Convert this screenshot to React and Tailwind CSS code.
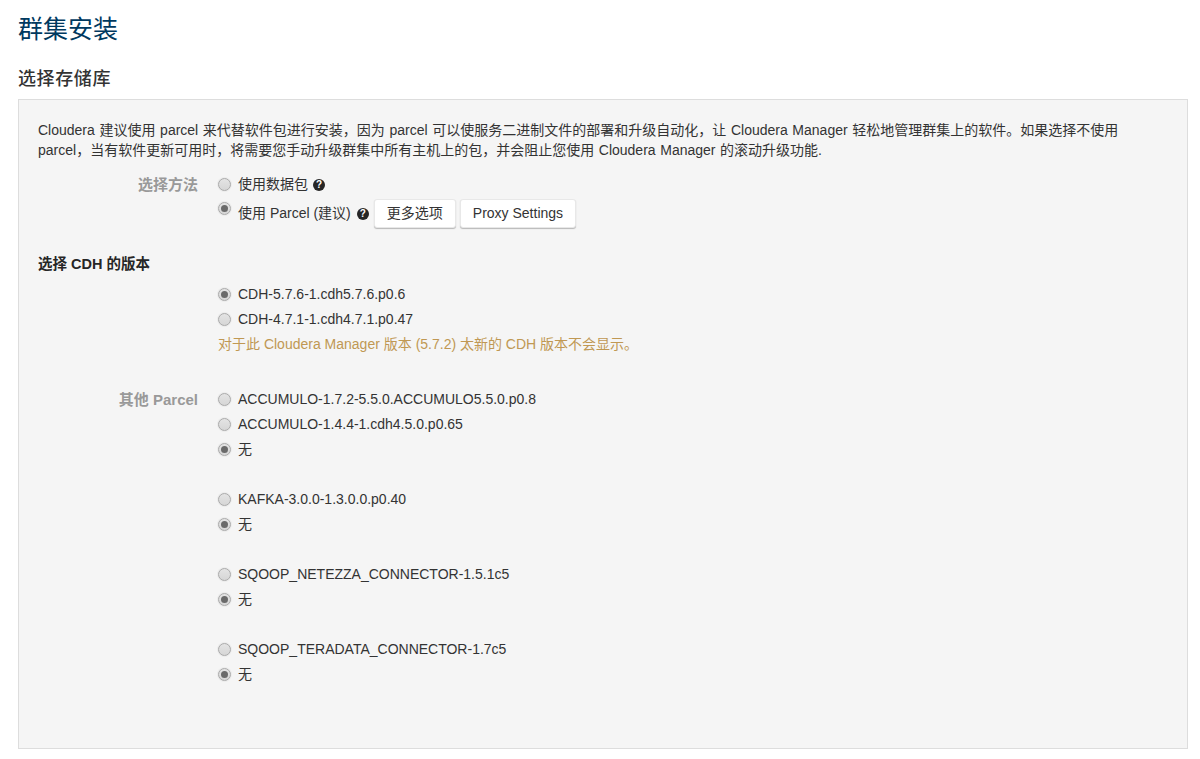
const FONT = "font-['Liberation_Sans','Noto_Sans_CJK_SC',sans-serif]";

const GROUPS = [
  ["ACCUMULO-1.7.2-5.5.0.ACCUMULO5.5.0.p0.8", "ACCUMULO-1.4.4-1.cdh4.5.0.p0.65"],
  ["KAFKA-3.0.0-1.3.0.0.p0.40"],
  ["SQOOP_NETEZZA_CONNECTOR-1.5.1c5"],
  ["SQOOP_TERADATA_CONNECTOR-1.7c5"],
];

const Radio = ({ checked, className = "" }) => (
  <span className={`w-[13px] h-[13px] shrink-0 rounded-full border border-[#a9a9a9] bg-gradient-to-b from-[#e4e4e4] to-[#d6d6d6] flex items-center justify-center shadow-[0_0_0_1px_#ececec] ${className}`}>
    {checked && <span className="w-[7px] h-[7px] rounded-full bg-[#6a6a6a]" />}
  </span>
);

const Help = () => (
  <span className="w-[12px] h-[12px] rounded-full bg-[#262626] text-white text-[10px] leading-[12px] font-bold text-center shrink-0">?</span>
);

const Option = ({ checked, children }) => (
  <div className="h-[25px] flex items-center">
    <Radio checked={checked} />
    <span className="ml-[7px]">{children}</span>
  </div>
);

const Button = ({ children }) => (
  <button className="h-[29px] px-3 bg-white rounded-[3px] border border-[#e8e8e8] shadow-[0_1px_1px_rgba(0,0,0,0.25)] text-[#333]">
    {children}
  </button>
);

const Label = ({ children }) => (
  <div className="w-[160px] text-right font-bold text-[15px] text-[#999] h-[25px] leading-[25px] shrink-0">{children}</div>
);

const App = () => {
  return (
    <div className={`${FONT} w-[1200px] h-[759px] bg-white overflow-hidden pl-[18px] text-[14px] text-[#333]`}>
      <h1 className="pt-[14px] text-[25px] leading-[30px] text-[#00395f]">群集安装</h1>
      <h2 className="mt-[22px] text-[18px] leading-[26px] font-medium text-[#333] tracking-[0.6px]">选择存储库</h2>

      <div className="mt-[7px] w-[1170px] h-[650px] bg-[#f5f5f5] border border-[#dddddd] pl-[19px] pt-[20px]">
        <p className="leading-[20px] max-w-[1090px] [word-spacing:0.75px]">
          Cloudera 建议使用 parcel 来代替软件包进行安装，因为 parcel 可以使服务二进制文件的部署和升级自动化，让 Cloudera Manager 轻松地管理群集上的软件。如果选择不使用 parcel，当有软件更新可用时，将需要您手动升级群集中所有主机上的包，并会阻止您使用 Cloudera Manager 的滚动升级功能.
        </p>

        <div className="mt-[12px] flex">
          <Label>选择方法</Label>
          <div className="ml-[20px] flex flex-col">
            <div className="h-[25px] flex items-center">
              <Radio />
              <span className="ml-[7px] mr-[5px]">使用数据包</span>
              <Help />
            </div>
            <div className="h-[33px] flex items-center">
              <Radio checked className="mb-[10px]" />
              <span className="ml-[7px] mr-[6px]">使用 Parcel (建议)</span>
              <Help />
              <div className="ml-[5px] flex gap-[4px]">
                <Button>更多选项</Button>
                <Button>Proxy Settings</Button>
              </div>
            </div>
          </div>
        </div>

        <div className="mt-[22px] h-[25px] leading-[25px] font-bold text-[14.5px] text-[#262626]">选择 CDH 的版本</div>

        <div className="mt-[5px] ml-[180px]">
          <Option checked>CDH-5.7.6-1.cdh5.7.6.p0.6</Option>
          <Option>CDH-4.7.1-1.cdh4.7.1.p0.47</Option>
          <div className="h-[25px] leading-[25px] text-[#c09853]">对于此 Cloudera Manager 版本 (5.7.2) 太新的 CDH 版本不会显示。</div>
        </div>

        <div className="mt-[30px] flex">
          <Label>其他 Parcel</Label>
          <div className="ml-[20px] flex flex-col gap-[25px]">
            {GROUPS.map((items) => (
              <div key={items[0]}>
                {items.map((name) => (
                  <Option key={name}>{name}</Option>
                ))}
                <Option checked>无</Option>
              </div>
            ))}
          </div>
        </div>
      </div>
    </div>
  );
};

export default App;
